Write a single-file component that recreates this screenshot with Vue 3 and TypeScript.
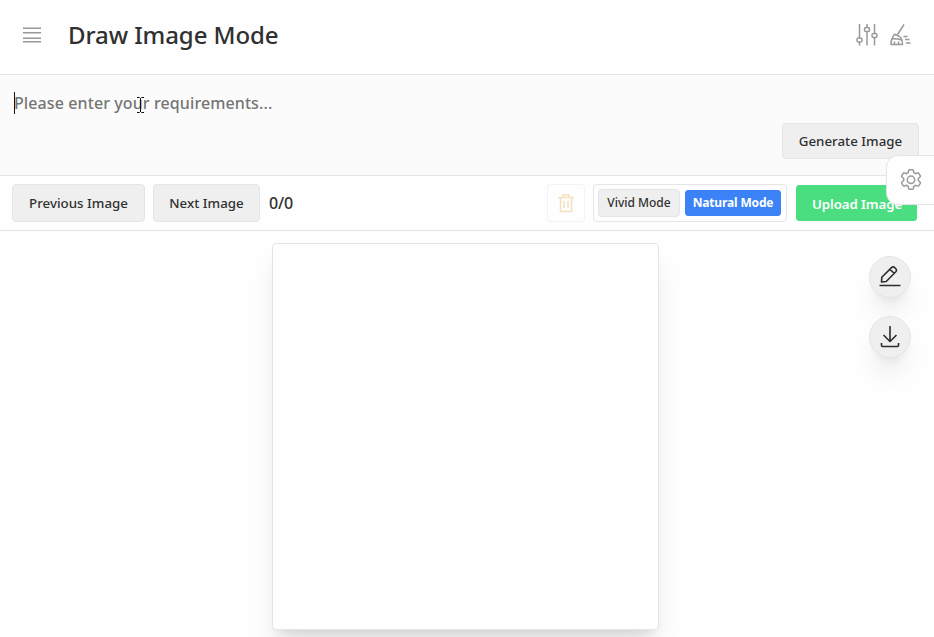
<script setup lang="ts">
import { ref } from 'vue'

type Mode = 'vivid' | 'natural'
const mode = ref<Mode>('natural')
const current = ref(0)
const images = ref<string[]>([])
</script>

<template>
  <div class="page">
    <header class="header">
      <svg class="menu" width="18" height="16" viewBox="0 0 18 16">
        <path class="bar-soft" d="M0 .5h18M0 6.500h18M0 10.500h18M0 15.500h18" />
        <path class="bar" d="M0 1.500h18M0 5.500h18M0 11.500h18M0 14.500h18" />
      </svg>
      <h1 class="title">Draw Image Mode</h1>
      <div class="tools">
        <svg width="22" height="22" viewBox="0 0 22 22">
          <path d="M3.500 0v14M3.500 18V21.500M11 0v3.500M11 7.500V21.500M18.500 0v9.500M18.500 13.500v8" />
          <rect x="1" y="14" width="5" height="4" rx="1.600" />
          <rect x="8.500" y="3.500" width="5" height="4" rx="1.600" />
          <rect x="16" y="9.500" width="5" height="4" rx="1.600" />
        </svg>
        <svg width="22" height="22" viewBox="0 0 22 22">
          <path d="M14 .5 7.500 10.500M4.500 10l6 3.200M4.500 10C3.500 13 1 13 1 20.500h11.500c0-3-.5-5.500-2-7.300M2 15c3-.8 6-.3 9.500 1M4.500 20.500v-3M8.500 20.500v-3M13.500 12.500h4M15 15.500h4.500M16 19h4.500" />
        </svg>
      </div>
    </header>

    <section class="prompt">
      <div class="field">
        <span class="caret"></span>
        <span class="placeholder">Please enter your requirements...</span>
        <svg class="pointer" width="7" height="16" viewBox="0 0 7 16">
          <path d="M0 .5h2.500l1 1 1-1H7M3.500 1v14M0 15.500h2.500l1-1 1 1H7" />
        </svg>
      </div>
      <button class="btn generate">Generate Image</button>
    </section>

    <section class="toolbar">
      <button class="btn previous">Previous Image</button>
      <button class="btn next">Next Image</button>
      <span class="counter">{{ current }}/{{ images.length }}</span>
      <button class="trash" disabled aria-label="Delete">
        <svg width="16" height="19" viewBox="0 0 16 19">
          <path d="M0 3.500h16M5 3V1h6v2M2.500 4v13.500h11V4M6 7v7M10 7v7" />
        </svg>
      </button>
      <div class="modes">
        <button class="mode vivid" :class="{ active: mode === 'vivid' }" @click="mode = 'vivid'">Vivid Mode</button>
        <button class="mode natural" :class="{ active: mode === 'natural' }" @click="mode = 'natural'">Natural Mode</button>
      </div>
      <button class="btn upload">Upload Image</button>
    </section>

    <main class="stage">
      <div class="canvas"></div>
      <div class="actions">
        <button class="round" aria-label="Edit">
          <svg width="22" height="22" viewBox="0 0 22 22">
            <path d="m2.500 16 .3-4.700L12.500 1.600Q14 .3 15.600 1.500l1.200 1.200q1.300 1.500 0 3L7.200 15.500zM11 3.500l4.500 4.200M.5 19.500h21" />
          </svg>
        </button>
        <button class="round" aria-label="Download">
          <svg width="22" height="22" viewBox="0 0 22 22">
            <path d="M11 0v15M4.500 9l6.500 6.500L17.500 9M2.500 17v2.500q0 1 1 1h15q1 0 1-1V17" />
          </svg>
        </button>
      </div>
    </main>

    <button class="settings" aria-label="Settings">
      <svg width="22" height="22" viewBox="0 0 22 22">
        <path d="M8.600 1.500Q8.800.7 9.600.7h2.800q.8 0 1 .8l.4 2.200 1.700 1 2.100-.8q.8-.2 1.200.4l1.400 2.400q.4.800-.2 1.300l-1.700 1.500v2l1.700 1.500q.6.500.2 1.300l-1.400 2.400q-.4.600-1.200.4l-2.100-.8-1.700 1-.4 2.200q-.2.800-1 .8H9.600q-.8 0-1-.8l-.4-2.200-1.700-1-2.100.8q-.8.200-1.200-.4l-1.400-2.400q-.4-.8.2-1.300l1.700-1.500v-2L2 8q-.6-.5-.2-1.300l1.400-2.400q.4-.6 1.200-.4l2.100.8 1.700-1z" />
        <circle cx="11" cy="10.800" r="3.700" />
      </svg>
    </button>
  </div>
</template>

<style>
body {
  background: #fefefe;
  overflow: hidden;
}
</style>

<style scoped>
.page {
  position: relative;
  height: 637px;
  overflow: hidden;
  background: #fefefe;
  color: #303030;
  font-family: "Noto Sans", sans-serif;
  font-weight: 500;
}
.page * {
  box-sizing: border-box;
}
svg {
  display: block;
  flex: none;
  fill: none;
  stroke: #999;
  stroke-width: 1.500;
  stroke-linecap: butt;
  stroke-linejoin: round;
}
button {
  padding: 0;
  font: inherit;
  color: inherit;
  white-space: nowrap;
}
.header {
  display: flex;
  align-items: center;
  height: 75px;
  padding: 0 22px 4px 23px;
  border-bottom: 1px solid #e5e5e8;
}
.menu {
  stroke-width: 1;
}
.bar-soft {
  stroke: #c9c9c9;
}
.bar {
  stroke: #999;
}
.title {
  margin: 0 0 0 27px;
  font-size: 24px;
  line-height: 36px;
  font-weight: 500;
  letter-spacing: -0.08px;
}
.tools {
  display: flex;
  gap: 12px;
  margin-left: auto;
}
.prompt {
  display: flex;
  flex-direction: column;
  height: 101px;
  padding: 16px 15px 16px 14px;
  background: #fbfbfb;
  border-bottom: 1px solid #e5e5e8;
}
.field {
  position: relative;
  display: flex;
  height: 24px;
  color: #757575;
  font-size: 16px;
  line-height: 24px;
  letter-spacing: 0.1px;
}
.caret {
  width: 1px;
  height: 22px;
  margin: 1px -1px 0 0;
  background: #111;
}
.pointer {
  position: absolute;
  left: 123px;
  top: 6px;
  stroke: #111;
  stroke-width: 1;
}
.btn {
  flex: none;
  height: 38px;
  border: 1px solid #e5e5e8;
  border-radius: 4px;
  background: #efefef;
  font-size: 13.3px;
  letter-spacing: 0.02px;
}
.generate {
  align-self: flex-end;
  width: 137px;
  height: 36px;
  margin-top: 8px;
}
.toolbar {
  display: flex;
  align-items: center;
  height: 55px;
  padding: 0 17px 0 12px;
  border-bottom: 1px solid #e5e5e8;
}
.previous {
  width: 133px;
}
.next {
  width: 107px;
  margin-left: 8px;
}
.counter {
  margin-left: 9px;
  font-size: 16px;
  line-height: 24px;
  letter-spacing: -0.1px;
}
.trash {
  display: grid;
  place-items: center;
  width: 38px;
  height: 38px;
  margin-left: auto;
  background: transparent;
  border: 1px solid #f3f3f4;
  border-radius: 4px;
}
.trash svg {
  stroke: #f5dfbd;
}
.modes {
  display: flex;
  align-items: center;
  gap: 5px;
  width: 194px;
  height: 38px;
  margin: 0 9px 0 8px;
  padding: 0 4px;
  border: 1px solid #e5e5e8;
  border-radius: 4px;
}
.mode {
  height: 28px;
  padding-bottom: 1px;
  border: 1px solid #e5e5e8;
  border-radius: 4px;
  background: #efefef;
  font-size: 12px;
}
.vivid {
  width: 82px;
}
.natural {
  width: 96px;
}
.mode.active {
  height: 26px;
  border-color: #3b82f6;
  border-radius: 3px;
  background: #3b82f6;
  color: #fff;
  font-weight: 700;
  letter-spacing: -0.15px;
}
.upload {
  width: 121px;
  height: 36px;
  padding: 2px 0 0 1px;
  border-color: #4ade80;
  border-radius: 3px;
  background: #4ade80;
  color: #fff;
  font-weight: 600;
  letter-spacing: -0.1px;
}
.stage {
  position: relative;
  display: flex;
  padding: 12px 0 0 272px;
}
.canvas {
  width: 387px;
  height: 387px;
  background: #fefefe;
  border: 1px solid #e5e5e8;
  border-radius: 4px;
  box-shadow: 0 20px 25px -5px rgba(0, 0, 0, 0.1), 0 8px 10px -6px rgba(0, 0, 0, 0.1);
}
.actions {
  display: flex;
  flex-direction: column;
  gap: 18px;
  margin: 13px 0 0 210px;
}
.round {
  display: grid;
  place-items: center;
  width: 42px;
  height: 42px;
  border: 1px solid #e5e5e8;
  border-radius: 50%;
  background: #efefef;
  box-shadow: 0 20px 25px -5px rgba(0, 0, 0, 0.08), 0 8px 10px -6px rgba(0, 0, 0, 0.08);
}
.round svg {
  stroke: #2f2b2c;
  stroke-width: 1.600;
}
.settings {
  position: absolute;
  top: 155px;
  right: -1px;
  display: flex;
  align-items: center;
  width: 49px;
  height: 50px;
  padding-left: 13px;
  border: 1px solid #e5e5e8;
  border-radius: 12px 0 0 12px;
  background: #fefefe;
}
</style>
